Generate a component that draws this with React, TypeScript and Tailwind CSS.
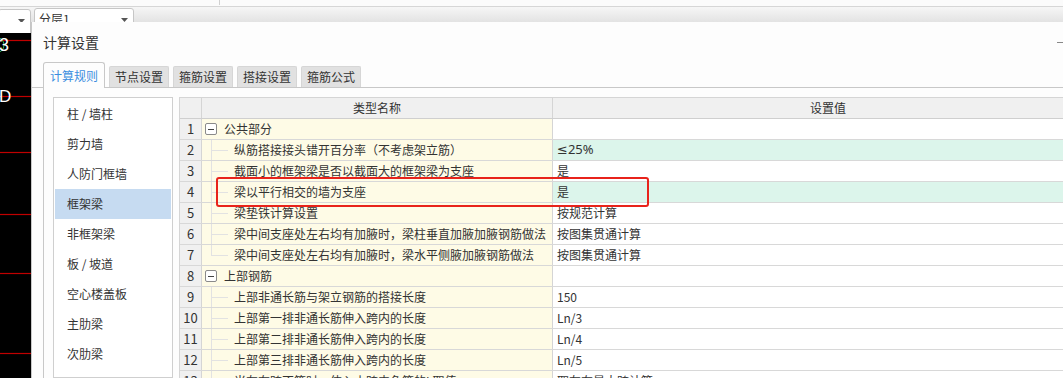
import { ReactNode } from 'react'

const rows: { name: string; value?: string; group?: boolean; green?: boolean }[] = [
	{ name: '公共部分', group: true },
	{ name: '纵筋搭接接头错开百分率（不考虑架立筋）', value: '≤25%', green: true },
	{ name: '截面小的框架梁是否以截面大的框架梁为支座', value: '是' },
	{ name: '梁以平行相交的墙为支座', value: '是', green: true },
	{ name: '梁垫铁计算设置', value: '按规范计算' },
	{ name: '梁中间支座处左右均有加腋时，梁柱垂直加腋加腋钢筋做法', value: '按图集贯通计算' },
	{ name: '梁中间支座处左右均有加腋时，梁水平侧腋加腋钢筋做法', value: '按图集贯通计算' },
	{ name: '上部钢筋', group: true },
	{ name: '上部非通长筋与架立钢筋的搭接长度', value: '150' },
	{ name: '上部第一排非通长筋伸入跨内的长度', value: 'Ln/3' },
	{ name: '上部第二排非通长筋伸入跨内的长度', value: 'Ln/4' },
	{ name: '上部第三排非通长筋伸入跨内的长度', value: 'Ln/5' },
	{ name: '当左右跨不等时，伸入小跨内负筋的L取值', value: '取左右最大跨计算' },
]

const components = ['柱 / 墙柱', '剪力墙', '人防门框墙', '框架梁', '非框架梁', '板 / 坡道', '空心楼盖板', '主肋梁', '次肋梁']

const tabs = ['计算规则', '节点设置', '箍筋设置', '搭接设置', '箍筋公式']

function Dropdown({ className, children }: { className: string; children?: ReactNode }) {
	return (
		<div className={`relative h-[26px] rounded-t-[3px] border border-[#c6c6c6] bg-white ${className}`}>
			<span className="absolute left-[4px] top-[1px] text-[12px] leading-[18px] text-[#333]">{children}</span>
			<svg width="7" height="4" className="absolute right-[5px] top-[9px]">
				<path d="M0 0 H7 L3.5 4 Z" fill="#555" />
			</svg>
		</div>
	)
}

function CadView() {
	const reds = [7, 63, 119, 181, 240, 320]
	return (
		<svg width="31" height="345" className="block">
			<rect width="31" height="345" fill="#000" />
			{reds.map((y) => (
				<line key={y} x1="0" x2="31" y1={y + 0.5} y2={y + 0.5} stroke="#c00000" strokeWidth="1.2" />
			))}
			<circle cx="-4" cy="12" r="8" fill="none" stroke="#2fb24a" strokeWidth="1" />
			<text x="-1" y="18" fill="#fff" fontSize="18" fontFamily="Liberation Sans, sans-serif">3</text>
			<text x="-1" y="69" fill="#fff" fontSize="17" fontFamily="Liberation Sans, sans-serif">D</text>
		</svg>
	)
}

function NameCell({ row, index }: { row: (typeof rows)[number]; index: number }) {
	if (row.group) {
		return (
			<div className="flex h-full w-[351px] items-center border-r border-[#d5d5d5] bg-[#fefbe6] pl-[3px]">
				<span className="flex h-[12px] w-[12px] items-center justify-center rounded-[2px] border border-[#8a8a8a] bg-white">
					<span className="h-px w-[6px] bg-[#444]" />
				</span>
				<span className="ml-[7px]">{row.name}</span>
			</div>
		)
	}
	const last = index === 6
	return (
		<div className="flex h-full w-[351px] items-center border-r border-[#d5d5d5] bg-[#fefbe6] pl-[9px]">
			<span className="relative h-full w-[23px] shrink-0">
				<span className={`absolute left-0 top-0 w-px bg-[#e2e2e2] ${last ? 'h-1/2' : 'h-full'}`} />
				<span className="absolute left-0 top-1/2 h-px w-[17px] bg-[#e2e2e2]" />
			</span>
			<span className="whitespace-nowrap">{row.name}</span>
		</div>
	)
}

export default function App() {
	return (
		<div className="h-[378px] w-[1063px] overflow-hidden bg-white font-['Noto_Sans_CJK_SC','Noto_Sans',sans-serif] text-[12px] text-[#333]">
			{/* toolbar strip */}
			<div className="relative h-[22px] overflow-hidden">
				<div className="h-[6px] bg-[#fbfbfb]">
					<div className="ml-[219px] h-[5px] w-px bg-[#d0d0d0]" />
				</div>
				<div className="h-[16px] border-t border-[#d6d6d6] bg-gradient-to-b from-[#f6f6f6] to-[#e3e3e3]" />
				<div className="absolute left-0 top-[8px] flex gap-[3px]">
					<Dropdown className="-ml-[2px] mt-[1px] w-[33px]" />
					<Dropdown className="w-[100px]">分层1</Dropdown>
				</div>
			</div>

			<div className="flex h-[356px]">
				{/* left drawing canvas */}
				<div className="flex w-[31px] shrink-0 flex-col">
					<div className="h-[11px] border-r border-[#c6c6c6] bg-white" />
					<CadView />
				</div>

				{/* dialog */}
				<div className="flex min-w-0 flex-1 flex-col border-l border-[#c8c8c8] bg-[#fdfdfd]">
					<div className="flex h-[41px] shrink-0 items-center justify-between pl-[11px]">
						<span className="text-[14px] text-[#333]">计算设置</span>
						<span className="h-[1.5px] w-[6px] bg-[#888]" />
					</div>

					<div className="flex h-[25px] shrink-0 items-end gap-[4px] border-b border-[#c8c8c8] pl-[11px]">
						{tabs.map((t, i) =>
							i === 0 ? (
								<div
									key={t}
									className="-mb-px flex h-[26px] items-center rounded-t-[3px] border border-b-0 border-[#c8c8c8] bg-[#fdfdfd] px-[6px] text-[#3b8ee0]"
								>
									{t}
								</div>
							) : (
								<div
									key={t}
									className="flex h-[21px] items-center rounded-t-[2px] border border-b-0 border-[#d6d6d6] bg-[#e1e1e1] px-[5px] text-[#333]"
								>
									{t}
								</div>
							),
						)}
					</div>

					<div className="ml-[11px] flex min-h-0 flex-1 gap-[6px] border-l border-[#c8c8c8] pl-[9px] pt-[9px]">
						{/* component list */}
						<div className="w-[120px] shrink-0 border border-[#cfcfcf] bg-white p-px">
							{components.map((c) => (
								<div
									key={c}
									className={`flex h-[30px] items-center pl-[12px] text-[12px] ${c === '框架梁' ? 'bg-[#c6dbf1]' : ''}`}
								>
									{c}
								</div>
							))}
						</div>

						{/* settings grid */}
						<div className="relative w-[925px] shrink-0 border-l border-t border-[#d5d5d5]">
							<div className="flex h-[21px] border-b border-[#cfcfcf] bg-[#f0f0f0]">
								<div className="w-[22px] border-r border-[#d5d5d5]" />
								<div className="flex w-[351px] items-center justify-center border-r border-[#d5d5d5]">类型名称</div>
								<div className="flex w-[550px] items-center justify-center">设置值</div>
							</div>
							{rows.map((r, i) => (
								<div key={i} className="flex h-[21px] border-b border-[#d8d8d8]">
									<div className="flex w-[22px] shrink-0 items-center justify-center border-r border-[#d5d5d5] bg-[#f0f0f0] text-[13px]">
										{i + 1}
									</div>
									<NameCell row={r} index={i} />
									<div
										className={`flex w-[550px] items-center pl-[4px] ${r.green ? 'bg-[#dcf5eb]' : 'bg-white'} ${r.value?.startsWith('≤') ? "font-['Noto_Sans','DejaVu_Sans',sans-serif] text-[13px]" : ''}`}
									>
										{r.value}
									</div>
								</div>
							))}
							<div className="pointer-events-none absolute left-[36px] top-[79px] h-[30px] w-[433px] rounded-[3px] border-2 border-[#e8231b]" />
						</div>
					</div>
				</div>
			</div>
		</div>
	)
}
